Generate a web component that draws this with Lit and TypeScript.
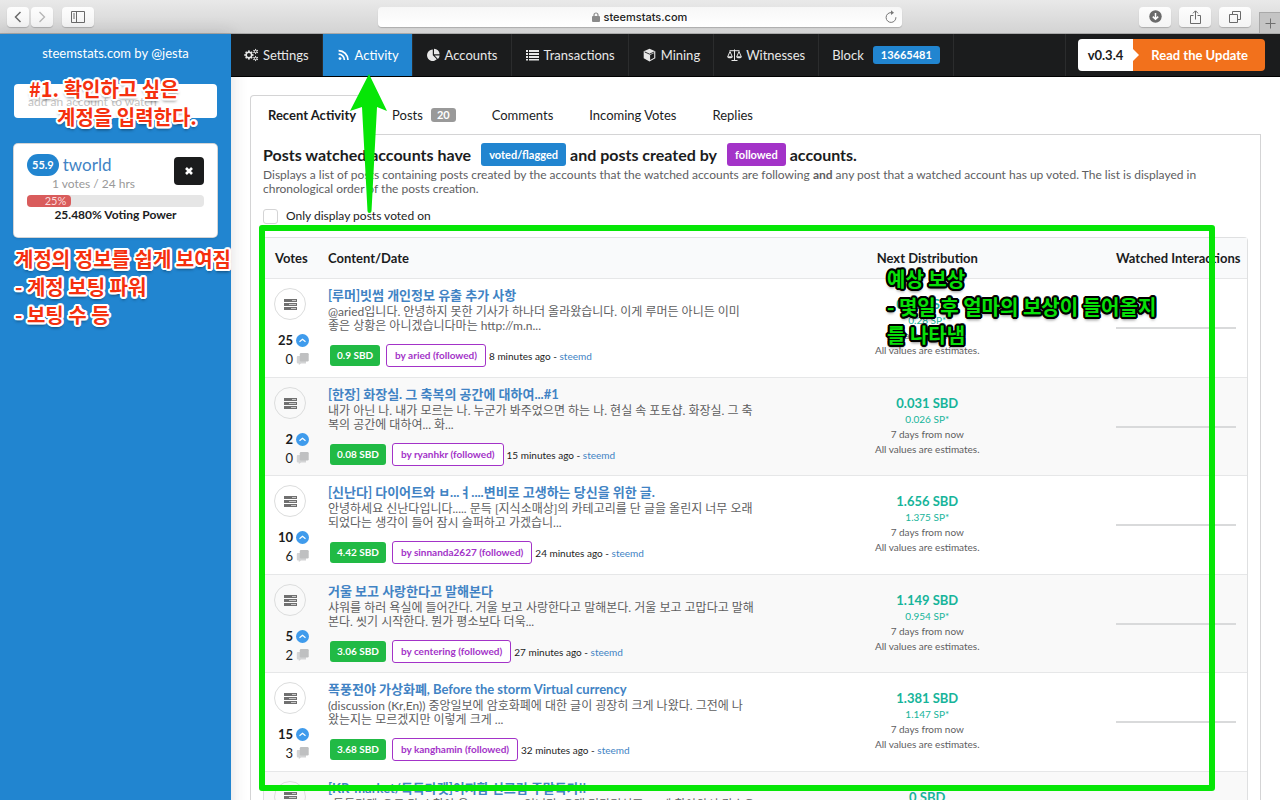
import { LitElement, html, css, svg, nothing } from "lit";
import { customElement } from "lit/decorators.js";

interface Post {
  votes: number;
  comments: number;
  title: string;
  body: string[];
  value: string;
  author: string;
  age: string;
  sbd: string;
  sp: string;
}

const POSTS: Post[] = [
  {
    votes: 25, comments: 0,
    title: "[루머]빗썸 개인정보 유출 추가 사항",
    body: ["@aried입니다. 안녕하지 못한 기사가 하나더 올라왔습니다. 이게 루머든 아니든 이미", "좋은 상황은 아니겠습니다마는 http://m.n..."],
    value: "0.9 SBD", author: "aried", age: "8 minutes ago", sbd: "0.337 SBD", sp: "0.28 SP*",
  },
  {
    votes: 2, comments: 0,
    title: "[한장] 화장실. 그 축복의 공간에 대하여...#1",
    body: ["내가 아닌 나. 내가 모르는 나. 누군가 봐주었으면 하는 나. 현실 속 포토샵. 화장실. 그 축", "복의 공간에 대하여... 화..."],
    value: "0.08 SBD", author: "ryanhkr", age: "15 minutes ago", sbd: "0.031 SBD", sp: "0.026 SP*",
  },
  {
    votes: 10, comments: 6,
    title: "[신난다] 다이어트와 ㅂ...ㅕ....변비로 고생하는 당신을 위한 글.",
    body: ["안녕하세요 신난다입니다..... 문득 [지식소매상]의 카테고리를 단 글을 올린지 너무 오래", "되었다는 생각이 들어 잠시 슬퍼하고 가겠습니..."],
    value: "4.42 SBD", author: "sinnanda2627", age: "24 minutes ago", sbd: "1.656 SBD", sp: "1.375 SP*",
  },
  {
    votes: 5, comments: 2,
    title: "거울 보고 사랑한다고 말해본다",
    body: ["샤워를 하러 욕실에 들어간다. 거울 보고 사랑한다고 말해본다. 거울 보고 고맙다고 말해", "본다. 씻기 시작한다. 뭔가 평소보다 더욱..."],
    value: "3.06 SBD", author: "centering", age: "27 minutes ago", sbd: "1.149 SBD", sp: "0.954 SP*",
  },
  {
    votes: 15, comments: 3,
    title: "폭풍전야 가상화폐, Before the storm Virtual currency",
    body: ["(discussion (Kr,En)) 중앙일보에 암호화폐에 대한 글이 굉장히 크게 나왔다. 그전에 나", "왔는지는 모르겠지만 이렇게 크게 ..."],
    value: "3.68 SBD", author: "kanghamin", age: "32 minutes ago", sbd: "1.381 SBD", sp: "1.147 SP*",
  },
  {
    votes: 3, comments: 1,
    title: "[KR-market/톡톡마켓]이지함 선크림 주말특가!!",
    body: ["*톡톡마켓*으로 다시 찾아 온 yoontaek 입니다. 오래 기다리셨죠^^ 제 찾아와서 감수요", "이번 주말 특가를 준비했습니다..."],
    value: "0.02 SBD", author: "yoontaek", age: "35 minutes ago", sbd: "0 SBD", sp: "0 SP*",
  },
];

const gear = (cx: number, cy: number, r: number, hole: number, teeth: number, w: number) => svg`
  <circle cx=${cx} cy=${cy} r=${(r + hole) / 2 - 0.3} fill="none" stroke="currentColor" stroke-width=${r - hole - 0.4}></circle>
  ${Array.from({ length: teeth }, (_, i) => svg`<rect x=${cx - w / 2} y=${cy - r - 0.6} width=${w} height="1.6" fill="currentColor" transform=${`rotate(${(360 / teeth) * i} ${cx} ${cy})`}></rect>`)}`;

const icons = {
  settings: html`<svg class="nav-icon" viewBox="0 0 15 14" aria-hidden="true">${gear(4.9, 7, 4, 2.1, 8, 1.7)}${gear(11.6, 3.5, 2, 1, 6, 1)}${gear(11.6, 10.5, 2, 1, 6, 1)}</svg>`,
  activity: html`<svg class="nav-icon" viewBox="0 0 15 14" aria-hidden="true" fill="none" stroke="currentColor" stroke-width="1.7"><circle cx="4" cy="10.6" r="1.4" fill="currentColor" stroke="none"></circle><path d="M2.6 6.2a5.8 5.8 0 0 1 5.8 5.8M2.6 2.6a9.4 9.4 0 0 1 9.4 9.4"></path></svg>`,
  accounts: html`<svg class="nav-icon" viewBox="0 0 15 14" aria-hidden="true" fill="currentColor"><path d="M6.8 1.6v5.7l4 4A5.7 5.7 0 1 1 6.8 1.6z"></path><path d="M8 .8a5.6 5.6 0 0 1 5.6 5.4H8z"></path><path d="M8.6 7.4h5a5.6 5.6 0 0 1-1.7 3.6z"></path></svg>`,
  transactions: html`<svg class="nav-icon" viewBox="0 0 15 14" aria-hidden="true" fill="currentColor"><path d="M1 2h2v2H1zM4 2h10v2H4zM1 5h2v2H1zM4 5h10v2H4zM1 8h2v2H1zM4 8h10v2H4zM1 11h2v1.6H1zM4 11h10v1.6H4z"></path></svg>`,
  mining: html`<svg class="nav-icon" viewBox="0 0 15 14" aria-hidden="true"><path fill="currentColor" d="M7.5.8l5.8 2.5v7L7.5 13.4 1.7 10.3v-7z"></path><path fill="none" stroke="#1b1c1d" stroke-width=".9" d="M2.6 3.9l4.9 2.2 4.9-2.2"></path><path fill="#1b1c1d" d="M8.1 7l4.1-1.9v4.6L8.1 11.9z"></path></svg>`,
  witnesses: html`<svg class="nav-icon" viewBox="0 0 15 14" aria-hidden="true" fill="none" stroke="currentColor"><path stroke-width="1" d="M2.5 2.7h10M7.5 1.5v11M4.5 12.5h6M.8 8.5l2.2-5 2.2 5M9.8 8.5l2.2-5 2.2 5"></path><path fill="currentColor" stroke="none" d="M.2 8.3h5.6a2.8 2 0 0 1-5.6 0zM9.2 8.3h5.6a2.8 2 0 0 1-5.6 0z"></path></svg>`,
};

const NAV: { key: keyof typeof icons; text: string; active?: boolean }[] = [
  { key: "settings", text: "Settings" },
  { key: "activity", text: "Activity", active: true },
  { key: "accounts", text: "Accounts" },
  { key: "transactions", text: "Transactions" },
  { key: "mining", text: "Mining" },
  { key: "witnesses", text: "Witnesses" },
];

const shared = css`
  :host, * { box-sizing: border-box; }
  a { text-decoration: none; color: inherit; }
  button { font: inherit; border: 0; padding: 0; margin: 0; }
  svg { display: block; flex: none; }
`;

@customElement("browser-bar")
export class BrowserBar extends LitElement {
  static styles = [shared, css`
    :host {
      display: grid;
      grid-template-columns: 1fr 41% 1fr;
      align-items: center;
      height: 34px;
      background: linear-gradient(#e9e9e9, #d3d3d3);
      border-bottom: 1px solid #a9a9a9;
    }
    .group { display: flex; align-items: center; }
    .left { padding-left: 7px; gap: 2px; }
    .right { justify-content: flex-end; gap: 8px; height: 100%; }
    .tool {
      display: grid;
      place-items: center;
      width: 32px;
      height: 20px;
      border-radius: 4px;
      background: linear-gradient(#fdfdfd, #f4f4f4);
      box-shadow: 0 1px 1px rgba(0, 0, 0, 0.2);
      color: #6a6a6a;
    }
    .small { width: 22px; }
    .dim { color: #b5b5b5; }
    .side { margin-left: 7px; }
    .plus {
      display: grid;
      place-items: center;
      align-self: flex-end;
      width: 21px;
      height: 21px;
      background: #c4c4c4;
      border-left: 1px solid #a9a9a9;
      border-top: 1px solid #a9a9a9;
      color: #6f6f6f;
    }
    .address {
      display: grid;
      grid-template-columns: 1fr auto 1fr;
      align-items: center;
      height: 20px;
      padding: 0 5px;
      border-radius: 4px;
      background: linear-gradient(#f7f7f7, #fff);
      box-shadow: 0 1px 1px rgba(0, 0, 0, 0.2);
    }
    .site { grid-column: 2; display: flex; align-items: center; gap: 3px; }
    .url {
      width: 84px;
      padding: 0;
      border: 0;
      background: none;
      color: #222;
      font: 500 11px "Inter", sans-serif;
    }
    .reload { justify-self: end; background: none; color: #777; }
  `];

  render() {
    return html`
      <div class="group left">
        <button class="tool small" aria-label="Back"><svg width="10" height="14" fill="none" stroke="currentColor" stroke-width="1.5"><path d="M7.5 2L2.5 7l5 5"></path></svg></button>
        <button class="tool small dim" aria-label="Forward"><svg width="10" height="14" fill="none" stroke="currentColor" stroke-width="1.3"><path d="M2.5 2l5 5-5 5"></path></svg></button>
        <button class="tool side" aria-label="Sidebar"><svg width="14" height="12" fill="none" stroke="currentColor"><path d="M.5.5h13v11H.5zM5.5.5v11M2 3h2M2 5h2M2 7h2"></path></svg></button>
      </div>
      <div class="address">
        <div class="site">
          <svg width="8" height="10" fill="#8a8a8a"><rect x="0" y="4" width="8" height="6" rx="1"></rect><path d="M2 4.5V3a2 2 0 0 1 4 0v1.5" fill="none" stroke="#8a8a8a" stroke-width="1.2"></path></svg>
          <input class="url" aria-label="Address" value="steemstats.com" />
        </div>
        <button class="reload" aria-label="Reload"><svg width="12" height="14" fill="none" stroke="currentColor"><path d="M10.9 7.2A4.9 4.9 0 1 1 6 2.6h1.5"></path><path d="M6 .2l3 2.5-3 2.4z" fill="currentColor" stroke="none"></path></svg></button>
      </div>
      <div class="group right">
        <button class="tool" aria-label="Downloads"><svg width="13" height="13"><circle cx="6.5" cy="6.5" r="6.2" fill="#6a6a6a"></circle><path d="M6.5 3v6M3.8 6.6l2.7 2.7 2.7-2.7" fill="none" stroke="#fff" stroke-width="1.5"></path></svg></button>
        <button class="tool" aria-label="Share"><svg width="11" height="14" fill="none" stroke="currentColor"><path d="M3.5 5.5h-3v8h10v-8h-3M5.5 9.5V1M3 3.3L5.5.8 8 3.3"></path></svg></button>
        <button class="tool" aria-label="Tabs"><svg width="12" height="12" fill="none" stroke="currentColor"><path d="M.5 3.5h8v8h-8zM3.5 3.5v-3h8v8h-3"></path></svg></button>
        <button class="plus" aria-label="New tab"><svg width="11" height="11" stroke="currentColor"><path d="M5.5.5v10M.5 5.5h10"></path></svg></button>
      </div>`;
  }
}

@customElement("account-sidebar")
export class AccountSidebar extends LitElement {
  static styles = [shared, css`
    :host {
      display: flex;
      flex-direction: column;
      padding: 11px 14px;
      background: #2185d0;
      box-shadow: 0 0 16px rgba(34, 36, 38, 0.15);
      font-size: 13px;
      line-height: 16px;
    }
    .brand { color: #fff; text-align: center; }
    .watch {
      width: 100%;
      height: 34px;
      margin-top: 23px;
      padding: 0 14px;
      border: 0;
      border-radius: 4px;
      background: #fff;
      font: inherit;
      font-size: 12px;
    }
    .watch::placeholder { color: #c3c3c3; opacity: 1; }
    .card {
      display: grid;
      grid-template-columns: 1fr auto;
      margin-top: 26px;
      padding: 10px 13px 14px;
      border-radius: 4px;
      background: #fff;
      box-shadow: 0 0 0 1px #d4d4d5, 0 1px 3px rgba(0, 0, 0, 0.2);
    }
    .who { display: flex; align-items: center; gap: 4px; height: 22px; }
    .score {
      padding: 3px 5px;
      border-radius: 11px;
      background: #2185d0;
      color: #fff;
      font-size: 11px;
      font-weight: 700;
    }
    .name { color: #4183c4; font-size: 17px; line-height: 20px; }
    .rate { padding-left: 25px; color: #999; font-size: 12px; }
    .close {
      align-self: start;
      display: grid;
      place-items: center;
      width: 30px;
      height: 28px;
      margin-top: 3px;
      border-radius: 4px;
      background: #1b1c1d;
      color: #fff;
    }
    .power { grid-column: 1 / -1; margin-top: 3px; }
    .track { height: 12px; border-radius: 4px; background: #e6e6e6; }
    .fill {
      height: 12px;
      padding-right: 5px;
      border-radius: 4px;
      background: #d95c5c;
      color: #fcdcdc;
      font-size: 11px;
      line-height: 12px;
      text-align: right;
    }
    .caption { color: #1b1c1d; font-size: 12px; font-weight: 700; text-align: center; }
  `];

  render() {
    return html`
      <a class="brand" href="#">steemstats.com by @jesta</a>
      <input class="watch" type="text" aria-label="Account" placeholder="add an account to watch" />
      <section class="card">
        <div>
          <div class="who"><span class="score">55.9</span><a class="name" href="#">tworld</a></div>
          <div class="rate">1 votes / 24 hrs</div>
        </div>
        <button class="close" aria-label="Remove account"><svg width="8" height="8" stroke="currentColor" stroke-width="2.6"><path d="M1 1l6 6M7 1L1 7"></path></svg></button>
        <div class="power">
          <div class="track"><div class="fill" style="width:25%">25%</div></div>
          <div class="caption">25.480% Voting Power</div>
        </div>
      </section>`;
  }
}

@customElement("main-nav")
export class MainNav extends LitElement {
  static styles = [shared, css`
    :host { display: block; position: relative; }
    .bar {
      display: flex;
      height: 43px;
      background: #1b1c1d;
      border-bottom: 1px solid #000;
      color: #e8e8e8;
      font-size: 13px;
    }
    .item {
      display: flex;
      align-items: center;
      gap: 4px;
      padding: 0 13px;
      border-right: 1px solid #2b2c2d;
    }
    .active { background: #2185d0; color: #fff; }
    .nav-icon { width: 15px; height: 14px; }
    .block { gap: 9px; }
    .number {
      padding: 0 8px;
      border-radius: 3px;
      background: #2185d0;
      color: #fff;
      font-size: 11px;
      font-weight: 700;
      line-height: 18px;
    }
    .release {
      display: flex;
      align-items: center;
      margin-left: auto;
      padding: 0 15px 0 12px;
      border-left: 1px solid #2b2c2d;
      font-weight: 700;
      line-height: 32px;
    }
    .version { padding: 0 10px; border-radius: 4px 0 0 4px; background: #fff; color: #1b1c1d; }
    .update { display: flex; align-items: center; padding-right: 17px; border-radius: 0 4px 4px 0; background: #f2711c; color: #fff; gap: 12px; }
  `];

  render() {
    return html`
      <nav class="bar">
        ${NAV.map((n) => html`<a class="item ${n.active ? "active" : ""}" href="#">${icons[n.key]}${n.text}</a>`)}
        <div class="item block">Block <span class="number">13665481</span></div>
        <div class="release">
          <span class="version">v0.3.4</span>
          <a class="update" href="#"><svg width="6" height="12" fill="#fff"><path d="M0 0l6 6-6 6z"></path></svg>Read the Update</a>
        </div>
      </nav>`;
  }
}

@customElement("activity-feed")
export class ActivityFeed extends LitElement {
  static styles = [shared, css`
    :host { display: block; padding: 18px 19px 0; color: #1b1c1d; font-size: 13px; }
    .tabs { display: flex; position: relative; }
    .tab {
      display: flex;
      align-items: center;
      gap: 8px;
      height: 39px;
      padding: 0 17px;
      border: 1px solid transparent;
      border-bottom: 0;
      line-height: 16px;
    }
    .tab-active {
      height: 40px;
      margin-bottom: -1px;
      padding-bottom: 1px;
      border-color: #d4d4d5;
      border-radius: 4px 4px 0 0;
      background: #fff;
      font-weight: 700;
    }
    .count {
      padding: 0 6px;
      border-radius: 3px;
      background: #999;
      color: #fff;
      font-size: 11px;
      font-weight: 700;
      line-height: 14px;
    }
    .panel { padding: 8px 12px 0; border: 1px solid #d4d4d5; }
    .heading {
      display: flex;
      align-items: center;
      margin: 0 0 2px;
      font-size: 16px;
      font-weight: 700;
      line-height: 23px;
    }
    .tag { margin: 0 4px 0 10px; padding: 0 8px; border-radius: 3px; color: #fff; font-size: 11px; }
    .blue { background: #2185d0; }
    .purple { background: #a333c8; }
    .lead { margin: 0; color: #5e5e5f; font-size: 12px; line-height: 14px; }
    .lead b { font-weight: 700; }
    .filter { display: flex; align-items: center; gap: 8px; margin: 12px 0 13px; font-size: 12px; line-height: 16px; }
    .check {
      appearance: none;
      width: 15px;
      height: 15px;
      margin: 0;
      border: 1px solid #d4d4d5;
      border-radius: 3px;
      background: #fff;
    }
    .posts {
      width: 100%;
      table-layout: fixed;
      border: 1px solid #dfe0e1;
      border-radius: 4px;
      border-spacing: 0;
      border-bottom: 0;
    }
    .col-votes { width: 53px; }
    .col-content { width: 44%; }
    .col-watched { width: 142px; }
    .posts th { height: 40px; padding: 0 11px; background: #f9fafb; font-weight: 700; text-align: left; white-space: nowrap; }
    .posts .mid { text-align: center; }
    .posts td { height: 99px; padding: 8px 11px 0; border-top: 1px solid #e6e7e8; vertical-align: top; }
    .posts tr:nth-child(even) td { height: 98px; background: #f9f9f9; }
    .posts .votes { padding: 9px 8px 0 10px; }
    .posts .plain { vertical-align: middle; padding: 0 11px; }
    .open {
      display: grid;
      place-items: center;
      width: 32px;
      height: 32px;
      border: 1px solid #dcdddd;
      border-radius: 50%;
      background: transparent;
    }
    .tally { display: grid; gap: 3px; margin-top: 12px; line-height: 16px; }
    .line { display: flex; align-items: center; justify-content: flex-end; gap: 3px; }
    .strong { font-weight: 700; }
    .title { display: block; color: #4183c4; font-weight: 700; line-height: 16px; white-space: nowrap; }
    .text { margin: 2px 0 0; color: #5e5e5f; font-size: 12px; line-height: 14px; white-space: nowrap; }
    .meta { display: flex; align-items: center; margin-top: 11px; padding-left: 2px; font-size: 10px; white-space: nowrap; }
    .meta a { color: #4183c4; }
    .worth { padding: 0 7px; border-radius: 3px; background: #21ba45; color: #fff; font-weight: 700; line-height: 21px; }
    .meta .author {
      margin: 0 3px 0 6px;
      padding: 0 8px;
      border: 1px solid #a333c8;
      border-radius: 3px;
      background: #fff;
      color: #a333c8;
      font-weight: 700;
      line-height: 21px;
    }
    .payout { padding-top: 8px; color: #5e5e5f; font-size: 10px; line-height: 15px; text-align: center; }
    .sbd { color: #16b49a; font-size: 13px; font-weight: 700; line-height: 18px; }
    .sp { color: #16b49a; }
    .spark { height: 2px; background: #d9dadb; }
  `];

  private row(p: Post) {
    return html`<tr>
      <td class="votes">
        <button class="open" aria-label="Details"><svg width="13" height="11" fill="#707070"><rect x="0" y="0" width="13" height="3"></rect><rect x="0" y="4" width="13" height="3"></rect><rect x="0" y="8" width="13" height="3"></rect><path fill="#c8c8c8" d="M8 1h4v1H8zM5 5h7v1H5zM7 9h5v1H7z"></path></svg></button>
        <div class="tally">
          <div class="line strong">${p.votes}<svg width="13" height="13"><circle cx="6.5" cy="6.5" r="6.5" fill="#3f9bec"></circle><path d="M3.5 7.8l3-2.6 3 2.6" fill="none" stroke="#fff" stroke-width="1.2"></path></svg></div>
          <div class="line">${p.comments}<svg width="13" height="12" viewBox="0 0 13 12"><path fill="#d3d4d5" d="M2 3h8v7.5H5L2.8 12v-1.5H2A1.2 1.2 0 0 1 .8 9.3V4.2C.8 3.5 1.3 3 2 3z"></path><path fill="#bfc0c1" d="M5 0h6.5a1.2 1.2 0 0 1 1.2 1.2v6a1.2 1.2 0 0 1-1.2 1.2H5a1.2 1.2 0 0 1-1.2-1.2v-6A1.2 1.2 0 0 1 5 0z"></path></svg></div>
        </div>
      </td>
      <td>
        <a class="title" href="#">${p.title}</a>
        <p class="text">${p.body.map((l, i) => html`${i ? html`<br />` : nothing}${l}`)}</p>
        <div class="meta">
          <span class="worth">${p.value}</span><a class="author" href="#">by ${p.author} (followed)</a>
          <span>${p.age} - <a href="#">steemd</a></span>
        </div>
      </td>
      <td>
        <div class="payout">
          <div class="sbd">${p.sbd}</div>
          <div class="sp">${p.sp}</div>
          <div>7 days from now</div>
          <div>All values are estimates.</div>
        </div>
      </td>
      <td class="plain"><div class="spark"></div></td>
    </tr>`;
  }

  render() {
    return html`
      <nav class="tabs">
        <a class="tab tab-active" href="#">Recent Activity</a>
        <a class="tab" href="#">Posts <span class="count">20</span></a>
        <a class="tab" href="#">Comments</a>
        <a class="tab" href="#">Incoming Votes</a>
        <a class="tab" href="#">Replies</a>
      </nav>
      <section class="panel">
        <h1 class="heading">Posts watched accounts have <span class="tag blue">voted/flagged</span> and posts created by <span class="tag purple">followed</span> accounts.</h1>
        <p class="lead">Displays a list of posts containing posts created by the accounts that the watched accounts are following <b>and</b> any post that a watched account has up voted. The list is displayed in chronological order of the posts creation.</p>
        <label class="filter"><input class="check" type="checkbox" />Only display posts voted on</label>
        <table class="posts">
          <colgroup><col class="col-votes" /><col class="col-content" /><col /><col class="col-watched" /></colgroup>
          <thead><tr><th>Votes</th><th>Content/Date</th><th class="mid">Next Distribution</th><th>Watched Interactions</th></tr></thead>
          <tbody>${POSTS.map((p) => this.row(p))}</tbody>
        </table>
      </section>`;
  }
}

@customElement("app-root")
export class AppRoot extends LitElement {
  static styles = [shared, css`
    :host {
      display: flex;
      flex-direction: column;
      position: relative;
      height: 100vh;
      overflow: hidden;
      background: #fff;
      font-family: "Lato", "Noto Sans CJK KR", sans-serif;
    }
    browser-bar { flex: none; }
    .body { display: grid; grid-template-columns: 231px minmax(0, 1fr); flex: 1; min-height: 0; }
    .note, .frame, .arrow { position: absolute; z-index: 2; pointer-events: none; }
    .note {
      margin: 0;
      font: 700 20px/28px "Noto Sans CJK KR", sans-serif;
      white-space: pre;
      text-shadow:
        2px 0 var(--edge), -2px 0 var(--edge), 0 2px var(--edge), 0 -2px var(--edge),
        1px 2px var(--edge), -1px 2px var(--edge), 1px -2px var(--edge), -1px -2px var(--edge),
        2px 1px var(--edge), -2px 1px var(--edge), 2px -1px var(--edge), -2px -1px var(--edge),
        0 3px 3px rgba(0, 0, 0, 0.5);
    }
    .red { --edge: #fff; color: #f5300e; }
    .green { --edge: #000; color: #08e008; }
    .note-input { left: 29px; top: 75px; }
    .indent { padding-left: 28px; }
    .note-card { left: 15px; top: 245px; }
    .note-payout { left: 887px; top: 265px; }
    .frame { left: 259px; top: 225px; width: 956px; height: 566px; border: 6px solid #06e606; border-radius: 3px; }
    .arrow { left: 350px; top: 74px; }
  `];

  render() {
    return html`
      <browser-bar></browser-bar>
      <div class="body">
        <account-sidebar></account-sidebar>
        <main>
          <main-nav></main-nav>
          <activity-feed></activity-feed>
        </main>
      </div>
      <div class="frame"></div>
      <svg class="arrow" width="38" height="140" fill="#06e606"><path d="M19 0L37 37 27 33 21.5 137a2 2 0 0 1-4 0L12 33 0 37z"></path></svg>
      <p class="note red note-input">#1. 확인하고 싶은<br /><span class="indent">계정을 입력한다.</span></p>
      <p class="note red note-card">계정의 정보를 쉽게 보여짐<br />- 계정 보팅 파워<br />- 보팅 수 등</p>
      <p class="note green note-payout">예상 보상<br />- 몇일 후 얼마의 보상이 들어올지<br />를 나타냄</p>`;
  }
}
